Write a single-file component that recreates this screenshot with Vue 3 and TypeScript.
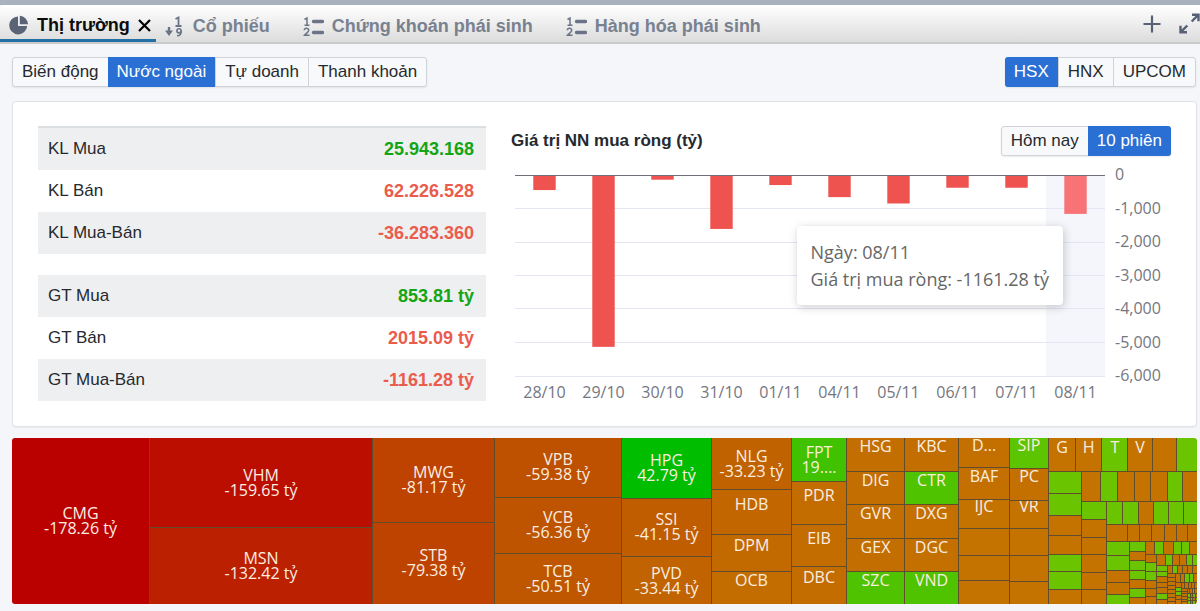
<script setup lang="ts">
import { computed, h, ref } from 'vue'
import type { VNode } from 'vue'

interface Tab { id: string; label: string; icon: 'pie' | 'sort' | 'list' }
interface Row { label: string; value: string; up: boolean }
interface Node {
  size: number
  dir?: 'row' | 'col'
  items?: Node[]
  color?: string
  name?: string
  value?: string
}

const tabs: Tab[] = [
  { id: 'market', label: 'Thị trường', icon: 'pie' },
  { id: 'stock', label: 'Cổ phiếu', icon: 'sort' },
  { id: 'derivative', label: 'Chứng khoán phái sinh', icon: 'list' },
  { id: 'commodity', label: 'Hàng hóa phái sinh', icon: 'list' },
]
const activeTab = ref('market')

const views = ['Biến động', 'Nước ngoài', 'Tự doanh', 'Thanh khoản']
const view = ref('Nước ngoài')
const exchanges = ['HSX', 'HNX', 'UPCOM']
const exchange = ref('HSX')
const ranges = ['Hôm nay', '10 phiên']
const range = ref('10 phiên')

const tables: Row[][] = [
  [
    { label: 'KL Mua', value: '25.943.168', up: true },
    { label: 'KL Bán', value: '62.226.528', up: false },
    { label: 'KL Mua-Bán', value: '-36.283.360', up: false },
  ],
  [
    { label: 'GT Mua', value: '853.81 tỷ', up: true },
    { label: 'GT Bán', value: '2015.09 tỷ', up: false },
    { label: 'GT Mua-Bán', value: '-1161.28 tỷ', up: false },
  ],
]

const sessions = [
  { day: '28/10', net: -450 },
  { day: '29/10', net: -5130 },
  { day: '30/10', net: -140 },
  { day: '31/10', net: -1610 },
  { day: '01/11', net: -300 },
  { day: '04/11', net: -660 },
  { day: '05/11', net: -850 },
  { day: '06/11', net: -380 },
  { day: '07/11', net: -380 },
  { day: '08/11', net: -1161.28 },
]
const hovered = 9
const ticks = ['0', '-1,000', '-2,000', '-3,000', '-4,000', '-5,000', '-6,000']
const bars = computed(() =>
  sessions.map((s, i) => ({
    x: `${i * 10 + 3.1}%`,
    height: `${(-s.net / 6000) * 100}%`,
    active: i === hovered,
  })),
)

const O = '#c47200'
const G = '#6ac500'
const row = (size: number, ...items: Node[]): Node => ({ size, dir: 'row', items })
const col = (size: number, ...items: Node[]): Node => ({ size, dir: 'col', items })
const tile = (size: number, color: string, name?: string, value?: string): Node => ({ size, color, name, value })
/* Unlabelled tiles: one letter per tile (o = net sell, g = net buy) with its size. */
const small = (tones: string, ...sizes: number[]): Node[] =>
  sizes.map((size, i) => tile(size, tones[i] === 'g' ? G : O))

const tinyCorner = row(48,
  col(18, ...small('oooooo', 8, 8, 8, 8, 8, 8)),
  col(32,
    row(15, ...small('oogo', 8, 8, 8, 8)),
    row(11, ...small('gogo', 10, 8, 8, 6)),
    row(11, ...small('ggog', 10, 8, 8, 6)),
    row(11, ...small('gogo', 10, 8, 8, 6))))

const corner6 = row(66,
  col(18, ...small('oggoo', 16, 12, 11, 10, 17)),
  col(50, row(18, ...small('ooooo', 12, 10, 10, 9, 9)), tinyCorner))

const corner5 = row(91,
  col(25, ...small('oooooooo', 12, 12, 12, 12, 11, 12, 10, 10)),
  col(68, row(25, ...small('ooggo', 17, 13, 13, 12, 13)), corner6))

const corner4 = row(117,
  col(31, ...small('ggooogo', 18, 17, 17, 16, 17, 16, 16)),
  col(93, row(26, ...small('ogoooo', 17, 15, 15, 16, 14, 16)), corner5))

const corner3 = row(149,
  col(34, ...small('oggooo', 26, 27, 25, 24, 25, 22)),
  col(124, row(32, ...small('ogoogg', 26, 21, 23, 21, 17, 16)), corner4))

const corner2 = row(188,
  col(50, ...small('goggogo', 31, 28, 28, 27, 27, 26, 21)),
  col(158, row(39, ...small('ogoggo', 28, 28, 29, 26, 24, 23)), corner3))

const corner1 = row(306,
  col(74, ...small('gooooo', 54, 53, 52, 52, 52, 43)),
  col(271,
    row(70, ...small('ggoggg', 48, 48, 44, 45, 45, 41)),
    row(48, ...small('ooooooo', 63, 38, 36, 36, 36, 34, 28)),
    row(188, col(63, ...small('ggoog', 44, 43, 36, 35, 30)), corner2)))

const treemap: Node = row(1,
  tile(137, '#bb0000', 'CMG', '-178.26 tỷ'),
  col(223, tile(90, '#bb0d00', 'VHM', '-159.65 tỷ'), tile(76, '#bb2000', 'MSN', '-132.42 tỷ')),
  col(122, tile(84, '#be4200', 'MWG', '-81.17 tỷ'), tile(82, '#be4300', 'STB', '-79.38 tỷ')),
  col(127,
    tile(59, '#be5100', 'VPB', '-59.38 tỷ'),
    tile(56, '#be5300', 'VCB', '-56.36 tỷ'),
    tile(50, '#be5700', 'TCB', '-50.51 tỷ')),
  col(90,
    tile(60, '#00bd00', 'HPG', '42.79 tỷ'),
    tile(58, '#bf5d00', 'SSI', '-41.15 tỷ'),
    tile(47, '#c06300', 'PVD', '-33.44 tỷ')),
  col(80,
    tile(52, '#c06200', 'NLG', '-33.23 tỷ'),
    tile(44, '#c26700', 'HDB'),
    tile(37, '#c26a00', 'DPM'),
    tile(32, '#c36d00', 'OCB')),
  col(55,
    tile(44, '#40c200', 'FPT', '19....'),
    tile(43, '#c36d00', 'PDR'),
    tile(41, '#c36d00', 'EIB'),
    tile(38, '#c36d00', 'DBC')),
  col(58,
    tile(33, '#c36e00', 'HSG'),
    tile(33, '#c36e00', 'DIG'),
    tile(33, '#c36e00', 'GVR'),
    tile(33, '#c36e00', 'GEX'),
    tile(32, '#50c300', 'SZC')),
  col(54,
    tile(33, '#c36e00', 'KBC'),
    tile(33, '#50c300', 'CTR'),
    tile(33, '#c37000', 'DXG'),
    tile(33, '#c37000', 'DGC'),
    tile(32, '#50c300', 'VND')),
  col(51,
    tile(30, '#c37000', 'D...'),
    tile(31, '#c37000', 'BAF'),
    tile(29, O, 'IJC'),
    ...small('ooo', 26, 25, 23)),
  col(39,
    tile(31, '#5cc400', 'SIP'),
    tile(31, '#c37000', 'PC'),
    tile(28, O, 'VR'),
    ...small('ooo', 27, 25, 23)),
  col(149,
    row(102,
      tile(81, O, 'G'), tile(79, O, 'H'), tile(77, G, 'T'), tile(73, O, 'V'),
      ...small('og', 74, 61)),
    row(393,
      col(99, ...small('ggooggo', 64, 65, 60, 58, 50, 51, 45)),
      col(345, row(87, ...small('ogooogo', 55, 52, 50, 48, 50, 47, 43)), corner1))))

const TreeNode = (props: { node: Node }): VNode => {
  const n = props.node
  if (n.items) {
    return h('div', { class: ['tree-group', `tree-${n.dir}`], style: { flexGrow: n.size } },
      n.items.map((item) => h(TreeNode, { node: item })))
  }
  return h('div', { class: 'tree-tile', style: { flexGrow: n.size, backgroundColor: n.color } },
    n.name ? [h('span', n.name), h('span', n.value ?? '')] : [])
}
TreeNode.props = ['node']
</script>

<template>
  <main class="page">
    <header class="tabbar">
      <nav class="tabs" aria-label="Bảng giá">
        <div v-for="t in tabs" :key="t.id" class="tab" :class="{ active: t.id === activeTab }">
          <button type="button" class="tab-button" @click="activeTab = t.id">
            <svg v-if="t.icon === 'pie'" width="20" height="20" viewBox="0 0 20 20" fill="#5b6477">
              <path d="M9 1.4V11h9.2A9 9 0 1 1 9 1.4z" />
              <path d="M10.8.8a9 9 0 0 1 8.3 8.4h-8.3z" />
            </svg>
            <svg v-else-if="t.icon === 'sort'" width="20" height="22" viewBox="0 0 20 22" fill="none" stroke="#6b7486">
              <path d="M4 11v6" stroke-width="2.400" />
              <path d="M0 14.500h8L4 20z" fill="#6b7486" stroke="none" />
              <path d="M10.500 3L13.500 1.500V10M10.500 10h6" stroke-width="1.800" />
              <circle cx="14" cy="14.800" r="2.100" stroke-width="1.600" />
              <path d="M16.200 14.800c.1 3.200-1 4.900-4.200 5" stroke-width="1.600" />
            </svg>
            <svg v-else width="21" height="22" viewBox="0 0 21 22" fill="none" stroke="#6b7486">
              <path d="M1.500 3.500L4 2v7.500M1.500 9.300h5" stroke-width="1.500" />
              <path d="M1.300 14.300c.2-2.700 4.500-2.500 4.400 0 0 1.700-2.400 2.700-4.200 5h5" stroke-width="1.500" />
              <path d="M10.500 5.500h9M10.500 16.500h9" stroke-width="3.400" stroke-linecap="round" />
            </svg>
            <span>{{ t.label }}</span>
          </button>
          <button v-if="t.id === activeTab" type="button" class="icon-button" aria-label="Đóng">
            <svg width="13" height="13" viewBox="0 0 13 13" fill="none" stroke="#000" stroke-width="2.200">
              <path d="M1 1l11 11M12 1L1 12" />
            </svg>
          </button>
        </div>
      </nav>
      <div class="tools">
        <button type="button" class="icon-button" aria-label="Thêm">
          <svg width="18" height="18" viewBox="0 0 18 18" fill="none" stroke="#566176" stroke-width="2.200" stroke-linecap="round">
            <path d="M9 1.300v15.400M1.300 9h15.400" />
          </svg>
        </button>
        <button type="button" class="icon-button" aria-label="Mở rộng">
          <svg width="21" height="21" viewBox="0 0 21 21" fill="none" stroke="#566176" stroke-width="2.400">
            <path d="M13 1.700h6.500v6.500M19 2.200l-6.300 6.300" />
            <path d="M8 19.300H1.500v-6.500M2 18.800l6.300-6.300" />
          </svg>
        </button>
      </div>
    </header>

    <div class="content">
      <div class="toolbar">
        <div class="segments">
          <button v-for="v in views" :key="v" type="button" :class="{ on: v === view }" @click="view = v">{{ v }}</button>
        </div>
        <div class="segments">
          <button v-for="e in exchanges" :key="e" type="button" :class="{ on: e === exchange }" @click="exchange = e">{{ e }}</button>
        </div>
      </div>

      <section class="card">
        <div class="tables">
          <table v-for="(rows, i) in tables" :key="i">
            <tbody>
              <tr v-for="r in rows" :key="r.label">
                <th scope="row">{{ r.label }}</th>
                <td :class="r.up ? 'up' : 'down'">{{ r.value }}</td>
              </tr>
            </tbody>
          </table>
        </div>

        <div class="chart">
          <div class="chart-head">
            <h2>Giá trị NN mua ròng (tỷ)</h2>
            <div class="segments">
              <button v-for="r in ranges" :key="r" type="button" :class="{ on: r === range }" @click="range = r">{{ r }}</button>
            </div>
          </div>
          <div class="chart-body">
            <div class="plot">
              <svg class="canvas" width="100%" height="201">
                <rect x="90%" y="0" width="10%" height="100%" fill="#f4f6fc" />
                <line
                  v-for="n in 6" :key="n" x1="0" x2="100%" :y1="`${(n / 6) * 100}%`" :y2="`${(n / 6) * 100}%`"
                  stroke="#e2e6f0" shape-rendering="crispEdges"
                />
                <rect
                  v-for="b in bars" :key="b.x" :x="b.x" y="0" width="3.8%" :height="b.height"
                  :fill="b.active ? '#f77376' : '#ee5350'"
                />
                <line x1="0" x2="100%" y1="0" y2="0" stroke="#6e7079" shape-rendering="crispEdges" />
              </svg>
              <div class="tooltip" role="tooltip">
                <div>Ngày: 08/11</div>
                <div>Giá trị mua ròng: -1161.28 tỷ</div>
              </div>
            </div>
            <div class="y-axis"><span v-for="t in ticks" :key="t">{{ t }}</span></div>
            <div class="x-axis"><span v-for="s in sessions" :key="s.day">{{ s.day }}</span></div>
          </div>
        </div>
      </section>

      <section class="treemap">
        <TreeNode :node="treemap" />
      </section>
    </div>
  </main>
</template>

<style>
body {
  margin: 0;
  background: #f4f6f9;
}

.tree-group {
  display: flex;
  flex-basis: 0;
  min-width: 0;
  min-height: 0;
}

.tree-col {
  flex-direction: column;
}

.tree-tile {
  display: flex;
  flex-direction: column;
  flex-basis: 0;
  align-items: center;
  justify-content: center;
  box-sizing: border-box;
  min-width: 0;
  min-height: 0;
  border-top: 1px solid #5f4d2c;
  border-left: 1px solid #5f4d2c;
  overflow: hidden;
  white-space: nowrap;
}

.tree-tile span {
  flex: none;
  height: 15px;
  line-height: 14px;
}
</style>

<style scoped>
.page {
  display: flex;
  flex-direction: column;
  box-sizing: border-box;
  min-height: 100vh;
  border-top: 5px solid #a9b0be;
  font-family: "Liberation Sans", Arial, sans-serif;
  font-size: 17px;
  color: #26292e;
  background: #f4f6f9;
}

button {
  margin: 0;
  padding: 0;
  border: 0;
  background: none;
  font: inherit;
  color: inherit;
  cursor: pointer;
}

svg {
  display: block;
  flex: none;
}

.tabbar {
  display: flex;
  justify-content: space-between;
  height: 37px;
  border-bottom: 2px solid #c9cacc;
  border-top-left-radius: 4px;
  background: linear-gradient(#ffffff, #dcdcdc);
}

.tabs {
  display: flex;
  gap: 33px;
}

.tab {
  display: flex;
  align-items: center;
  padding-top: 6px;
  font-size: 18px;
  font-weight: bold;
  color: #78818f;
}

.tab.active {
  gap: 8px;
  margin-right: -24px;
  padding: 6px 5px 0 9px;
  border-bottom: 3px solid #2270a4;
  color: #0c0c0c;
}

.tab-button {
  display: flex;
  align-items: center;
  gap: 8px;
  white-space: nowrap;
}

.tools {
  display: flex;
  align-items: center;
  gap: 18px;
}

.content {
  display: flex;
  flex: 1;
  flex-direction: column;
  padding: 13px 3px 7px 12px;
}

.toolbar {
  display: flex;
  justify-content: space-between;
  padding-right: 1px;
}

.segments {
  display: flex;
  height: 30px;
  box-sizing: border-box;
  border: 1px solid #d0d4d8;
  border-radius: 3px;
  background: #f8f9fa;
  box-shadow: 0 1px 2px rgba(0, 0, 0, 0.08);
}

.segments button {
  padding: 0 9px;
  white-space: nowrap;
}

.segments button + button {
  border-left: 1px solid #d0d4d8;
}

.segments button.on {
  margin: -1px 0;
  border-left: 0;
  background: #2a6fd3;
  color: #ffffff;
}

.segments button.on:first-child {
  margin-left: -1px;
  border-radius: 3px 0 0 3px;
}

.segments button.on:last-child {
  margin-right: -1px;
  border-radius: 0 3px 3px 0;
}

.card {
  display: grid;
  grid-template-columns: 448fr 660fr;
  gap: 25px;
  margin: 14px 0 11px;
  padding: 24px 25px 25px;
  border: 1px solid #dfe2e6;
  border-radius: 4px;
  background: #ffffff;
  box-shadow: 0 1px 1px rgba(0, 0, 0, 0.05);
}

.tables {
  display: flex;
  flex-direction: column;
  gap: 21px;
}

table {
  width: 100%;
  border-collapse: separate;
  border-spacing: 0;
}

table:first-child {
  border-top: 2px solid #dcdfe2;
}

tr:nth-child(odd) {
  background: #eeeff1;
}

th,
td {
  height: 42px;
  padding: 0 12px 0 10px;
  text-align: left;
  font-weight: normal;
}

td {
  text-align: right;
  font-size: 18px;
  font-weight: bold;
}

.up {
  color: #14a514;
}

.down {
  color: #ea5c4c;
}

.chart-head {
  display: flex;
  align-items: center;
  justify-content: space-between;
}

h2 {
  margin: 0;
  font-size: 17px;
  font-weight: bold;
}

.chart-body {
  display: grid;
  grid-template-columns: 1fr 66px;
  margin: 8px 0 0 4px;
  font-family: "Open Sans", "Noto Sans", sans-serif;
  font-size: 16px;
  color: #75777f;
}

.plot {
  position: relative;
  padding-top: 11px;
}

.canvas {
  overflow: visible;
}

.tooltip {
  position: absolute;
  top: 62px;
  right: 42px;
  padding: 13px 14px 12px;
  border-radius: 4px;
  background: #ffffff;
  box-shadow: 1px 2px 10px rgba(0, 0, 0, 0.2);
  font-size: 18px;
  line-height: 27px;
  white-space: nowrap;
  color: #666666;
}

.y-axis {
  display: flex;
  flex-direction: column;
  justify-content: space-between;
  height: 221px;
  margin-bottom: -9px;
  padding-left: 10px;
}

.y-axis span {
  line-height: 20px;
}

.x-axis {
  display: flex;
  padding-top: 7px;
  line-height: 18px;
}

.x-axis span {
  flex: 1;
  text-align: center;
}

.treemap {
  display: flex;
  flex: 1;
  min-height: 150px;
  border-radius: 3px;
  overflow: hidden;
  font-family: "Open Sans", "Noto Sans", sans-serif;
  font-size: 16px;
  color: #fbeee0;
}

.treemap > :first-child {
  margin: -1px 0 0 -1px;
}
</style>
